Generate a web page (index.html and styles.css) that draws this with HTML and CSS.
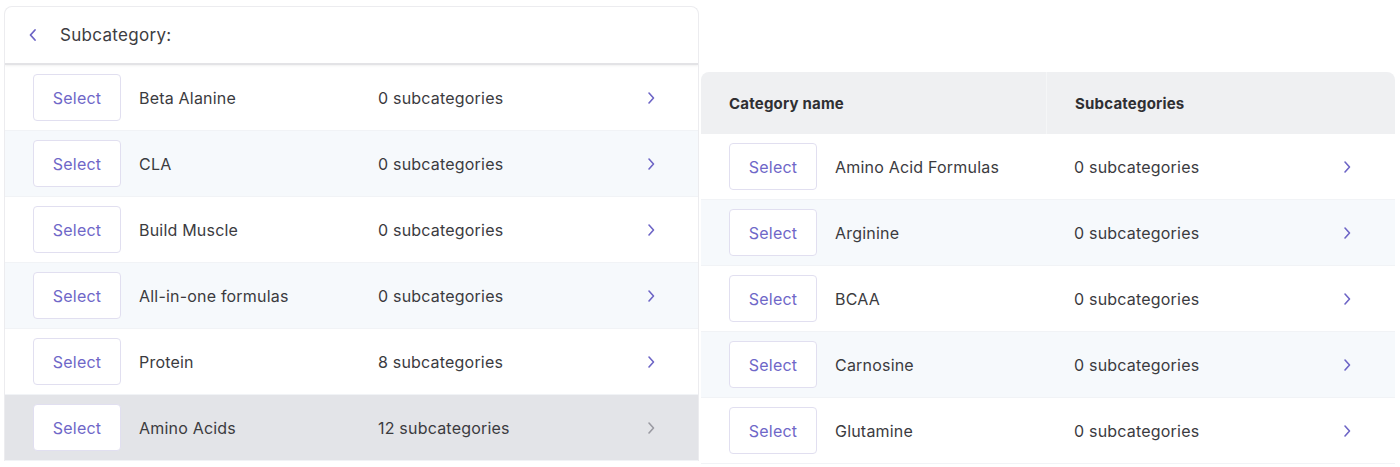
FILE: index.html
```html
<!DOCTYPE html>
<html lang="en">

<head>
    <meta charset="UTF-8">
    <meta name="viewport" content="width=device-width, initial-scale=1.0">
    <title>Categories</title>
    <link rel="stylesheet" href="styles.css">
</head>

<body>
    <div class="container">
        <div class="panel panel-left">
            <div class="panel-head">
                <svg class="back" width="10" height="14" viewBox="0 0 10 14">
                    <path d="M7 2 L2.5 7 L7 12" fill="none" stroke="#6d65c6" stroke-width="1.8" stroke-linecap="round" stroke-linejoin="round"/>
                </svg>
                <span>Subcategory:</span>
            </div>
            <div class="row">
                <div class="btn">Select</div>
                <div class="name">Beta Alanine</div>
                <div class="count">0 subcategories</div>
                <svg class="arrow" width="10" height="14" viewBox="0 0 10 14"><path d="M3 2 L7.5 7 L3 12" /></svg>
            </div>
            <div class="row tint">
                <div class="btn">Select</div>
                <div class="name">CLA</div>
                <div class="count">0 subcategories</div>
                <svg class="arrow" width="10" height="14" viewBox="0 0 10 14"><path d="M3 2 L7.5 7 L3 12" /></svg>
            </div>
            <div class="row">
                <div class="btn">Select</div>
                <div class="name">Build Muscle</div>
                <div class="count">0 subcategories</div>
                <svg class="arrow" width="10" height="14" viewBox="0 0 10 14"><path d="M3 2 L7.5 7 L3 12" /></svg>
            </div>
            <div class="row tint">
                <div class="btn">Select</div>
                <div class="name">All-in-one formulas</div>
                <div class="count">0 subcategories</div>
                <svg class="arrow" width="10" height="14" viewBox="0 0 10 14"><path d="M3 2 L7.5 7 L3 12" /></svg>
            </div>
            <div class="row">
                <div class="btn">Select</div>
                <div class="name">Protein</div>
                <div class="count">8 subcategories</div>
                <svg class="arrow" width="10" height="14" viewBox="0 0 10 14"><path d="M3 2 L7.5 7 L3 12" /></svg>
            </div>
            <div class="row active">
                <div class="btn">Select</div>
                <div class="name">Amino Acids</div>
                <div class="count">12 subcategories</div>
                <svg class="arrow" width="10" height="14" viewBox="0 0 10 14"><path d="M3 2 L7.5 7 L3 12" /></svg>
            </div>
        </div>

        <div class="panel panel-right">
            <div class="table-head">
                <div class="th th-name">Category name</div>
                <div class="th th-count">Subcategories</div>
            </div>
            <div class="row">
                <div class="btn">Select</div>
                <div class="name">Amino Acid Formulas</div>
                <div class="count">0 subcategories</div>
                <svg class="arrow" width="10" height="14" viewBox="0 0 10 14"><path d="M3 2 L7.5 7 L3 12" /></svg>
            </div>
            <div class="row tint">
                <div class="btn">Select</div>
                <div class="name">Arginine</div>
                <div class="count">0 subcategories</div>
                <svg class="arrow" width="10" height="14" viewBox="0 0 10 14"><path d="M3 2 L7.5 7 L3 12" /></svg>
            </div>
            <div class="row">
                <div class="btn">Select</div>
                <div class="name">BCAA</div>
                <div class="count">0 subcategories</div>
                <svg class="arrow" width="10" height="14" viewBox="0 0 10 14"><path d="M3 2 L7.5 7 L3 12" /></svg>
            </div>
            <div class="row tint">
                <div class="btn">Select</div>
                <div class="name">Carnosine</div>
                <div class="count">0 subcategories</div>
                <svg class="arrow" width="10" height="14" viewBox="0 0 10 14"><path d="M3 2 L7.5 7 L3 12" /></svg>
            </div>
            <div class="row">
                <div class="btn">Select</div>
                <div class="name">Glutamine</div>
                <div class="count">0 subcategories</div>
                <svg class="arrow" width="10" height="14" viewBox="0 0 10 14"><path d="M3 2 L7.5 7 L3 12" /></svg>
            </div>
        </div>
    </div>
</body>

</html>
```

FILE: styles.css
```css
body {
    margin: 0;
    font-family: Inter, "Liberation Sans", sans-serif;
    color: #3b3b3f;
    background: #fff;
}

.container {
    display: flex;
    align-items: flex-start;
    gap: 2px;
    padding: 6px 5px 0 4px;
}

.panel {
    width: 694px;
    background: #fff;
    overflow: hidden;
}

.panel-left {
    border: 1px solid #ececef;
    border-bottom: none;
    border-radius: 8px 8px 0 0;
}

.panel-right {
    margin-top: 66px;
    width: 695px;
    border-radius: 8px 8px 0 0;
}

.panel-head {
    height: 56px;
    display: flex;
    align-items: center;
    gap: 22px;
    padding-left: 23px;
    font-size: 17px;
    letter-spacing: 0.3px;
    color: #3d3d42;
    border-bottom: 2px solid #e3e3e6;
    box-shadow: 0 1px 2px rgba(0, 0, 0, 0.06);
}

.table-head {
    display: flex;
    height: 62px;
    background: #eff0f2;
}

.th {
    display: flex;
    align-items: center;
    font-size: 15px;
    font-weight: 700;
    letter-spacing: 0.2px;
    color: #2f2f33;
}

.th-name {
    width: 317px;
    padding-left: 28px;
    border-right: 1px solid #f5f6f7;
}

.th-count {
    padding-left: 28px;
}

.row {
    display: flex;
    align-items: center;
    height: 66px;
    padding-left: 28px;
    font-size: 16px;
    letter-spacing: 0.2px;
    border-bottom: 1px solid #f1f3f6;
    box-sizing: border-box;
}

.row.tint {
    background: #f6f9fc;
}

.row.active {
    background: #e3e4e8;
}

.btn {
    width: 86px;
    height: 45px;
    display: flex;
    align-items: center;
    justify-content: center;
    border: 1px solid #e1dff0;
    border-radius: 4px;
    background: #fff;
    color: #6f67c8;
    font-size: 16px;
}

.name {
    width: 239px;
    margin-left: 18px;
}

.count {
    width: 268px;
}

.arrow {
    fill: none;
    stroke: #6d65c6;
    stroke-width: 1.6;
    stroke-linecap: round;
    stroke-linejoin: round;
}

.row.active .arrow {
    stroke: #9a9aa2;
}
```
